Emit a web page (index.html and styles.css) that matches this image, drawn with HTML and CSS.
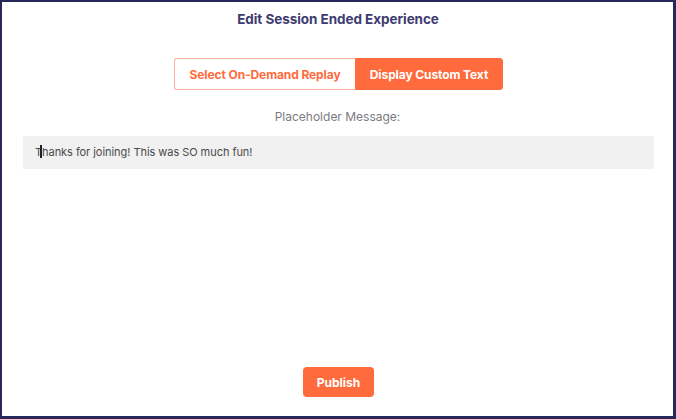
FILE: index.html
```html
<!DOCTYPE html>
<html>
<head>
<meta charset="utf-8">
<link rel="stylesheet" href="styles.css">
</head>
<body>
<div class="frame">
  <h1 class="title">Edit Session Ended Experience</h1>
  <div class="toggle">
    <button class="opt opt-off">Select On-Demand Replay</button>
    <button class="opt opt-on">Display Custom Text</button>
  </div>
  <div class="label">Placeholder Message:</div>
  <div class="field">T<span class="caret"></span>hanks for joining! This was SO much fun!</div>
  <div class="footer">
    <button class="publish">Publish</button>
  </div>
</div>
</body>
</html>
```

FILE: styles.css
```css
html, body {
  margin: 0;
  padding: 0;
  background: #ffffff;
}
body {
  font-family: Inter, "Noto Sans", sans-serif;
}
.frame {
  box-sizing: border-box;
  width: 676px;
  height: 419px;
  border-style: solid;
  border-color: #27275a;
  border-width: 2px 3px 3px 2px;
  display: flex;
  flex-direction: column;
  align-items: center;
  background: #fff;
}
.title {
  margin: 9px 0 0 1px;
  font-size: 13.5px;
  font-weight: 700;
  color: #3d3b6f;
  line-height: 16px;
  letter-spacing: -0.05px;
}
.toggle {
  display: flex;
  margin: 31px 0 0 2px;
  height: 32px;
}
.opt {
  font-family: Inter, "Noto Sans", sans-serif;
  font-size: 12px;
  font-weight: 700;
  padding: 0 13px;
  height: 32px;
  border: 1px solid #ff6b3d;
  cursor: pointer;
  letter-spacing: -0.1px;
}
.opt-off {
  width: 181px;
  background: #ffffff;
  color: #ff6b3d;
  border-color: #ffb29a;
  border-radius: 3px 0 0 3px;
  border-right: none;
}
.opt-on {
  width: 148px;
  background: #ff6b3d;
  color: #ffffff;
  border-radius: 0 3px 3px 0;
}
.label {
  margin-top: 20px;
  font-size: 12px;
  color: #7b7b82;
  line-height: 14px;
}
.field {
  align-self: stretch;
  margin: 12px 19px 0 21px;
  height: 33px;
  background: #f1f1f1;
  font-size: 11px;
  color: #4a4a4a;
  line-height: 33px;
  padding-left: 12px;
  letter-spacing: -0.05px;
}
.caret {
  display: inline-block;
  width: 1.5px;
  height: 13px;
  background: #222;
  vertical-align: -2px;
  margin-left: -2px;
  margin-right: 0.5px;
}
.footer {
  margin: auto 0 0 2px;
  padding-bottom: 19px;
}
.publish {
  font-family: Inter, "Noto Sans", sans-serif;
  width: 71px;
  height: 30px;
  background: #ff6b3d;
  color: #ffffff;
  border: none;
  border-radius: 4px;
  font-size: 12px;
  font-weight: 700;
}
```
